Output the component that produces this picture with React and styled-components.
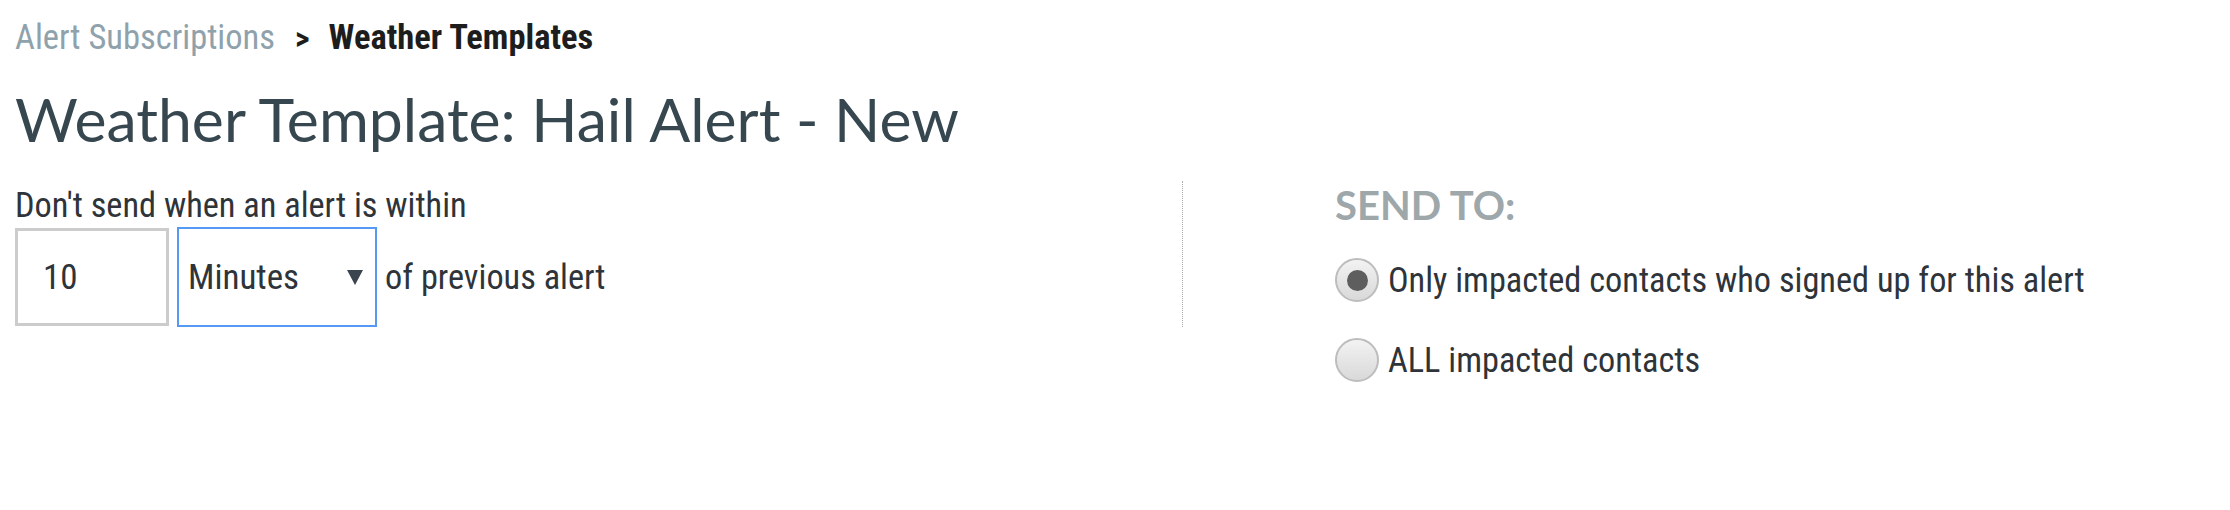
import styled, { createGlobalStyle } from "styled-components";

const GlobalStyle = createGlobalStyle`
  body {
    margin: 0;
    background: #fff;
    font-family: "Roboto Condensed", Roboto, "Liberation Sans", sans-serif;
    font-stretch: condensed;
  }
`;

const Page = styled.div`
  padding: 19px 15px 0 15px;
`;

const Breadcrumb = styled.div`
  display: flex;
  align-items: baseline;
  height: 36px;
  font-size: 34.5px;
  line-height: 36px;
  color: #8fa2ac;
`;

const Crumb = styled.span`
  color: ${(p) => (p.$current ? "#1d1d1d" : "#8fa2ac")};
  font-weight: ${(p) => (p.$current ? 700 : 400)};
`;

const Sep = styled.span`
  color: #1d1d1d;
  font-weight: 700;
  font-size: 32px;
  margin: 0 19px 0 20px;
`;

const Title = styled.h1`
  margin: 28px 0 0 0;
  font-family: Lato, "Liberation Sans", sans-serif;
  font-weight: 400;
  font-stretch: normal;
  font-size: 60.7px;
  line-height: 72px;
  color: #37474f;
`;

const Content = styled.div`
  display: flex;
  margin-top: 26px;
  align-items: flex-start;
`;

const LeftCol = styled.div`
  width: 1167px;
  border-right: 1px dotted #aaaaaa;
  padding-top: 4px;
`;

const Label = styled.div`
  font-size: 34.3px;
  line-height: 41px;
  color: #2e3439;
`;

const InputRow = styled.div`
  display: flex;
  align-items: center;
  gap: 8px;
  margin-top: 1px;
`;

const NumberBox = styled.div`
  box-sizing: border-box;
  width: 154px;
  height: 98px;
  border: 3px solid #cccccc;
  padding-left: 25px;
  display: flex;
  align-items: center;
  font-size: 35px;
  color: #2e3439;
`;

const Select = styled.div`
  box-sizing: border-box;
  width: 200px;
  height: 100px;
  border: 2px solid #5599f5;
  padding: 0 12px 0 9px;
  display: flex;
  align-items: center;
  justify-content: space-between;
  font-size: 35px;
  color: #2e3439;
`;

const Caret = styled.span`
  width: 0;
  height: 0;
  border-left: 8px solid transparent;
  border-right: 8px solid transparent;
  border-top: 15px solid #3a4550;
`;

const Suffix = styled.span`
  font-size: 34.3px;
  color: #2e3439;
`;

const RightCol = styled.div`
  padding-left: 152px;
`;

const SendTo = styled.div`
  font-family: Lato, "Liberation Sans", sans-serif;
  font-stretch: normal;
  font-weight: 700;
  font-size: 40px;
  line-height: 48px;
  color: #9ea7aa;
  margin-bottom: 29px;
`;

const Option = styled.label`
  display: flex;
  align-items: center;
  gap: 9px;
  height: 44px;
  margin-bottom: 36px;
  font-size: 34.3px;
  color: #2e3439;
`;

const Radio = styled.span`
  box-sizing: border-box;
  width: 44px;
  height: 44px;
  border-radius: 50%;
  border: 2px solid #bdbdbd;
  background: linear-gradient(#f2f2f2, #d9d9d9);
  display: flex;
  align-items: center;
  justify-content: center;
  flex-shrink: 0;

  &::after {
    content: "";
    width: 21px;
    height: 21px;
    border-radius: 50%;
    background: ${(p) => (p.$checked ? "#5e5e5e" : "transparent")};
  }
`;

const options = [
  { text: "Only impacted contacts who signed up for this alert", checked: true },
  { text: "ALL impacted contacts", checked: false },
];

export default function App() {
  return (
    <Page>
      <GlobalStyle />
      <Breadcrumb>
        <Crumb>Alert Subscriptions</Crumb>
        <Sep>&gt;</Sep>
        <Crumb $current>Weather Templates</Crumb>
      </Breadcrumb>
      <Title>Weather Template: Hail Alert - New</Title>
      <Content>
        <LeftCol>
          <Label>Don't send when an alert is within</Label>
          <InputRow>
            <NumberBox>10</NumberBox>
            <Select>
              <span>Minutes</span>
              <Caret />
            </Select>
            <Suffix>of previous alert</Suffix>
          </InputRow>
        </LeftCol>
        <RightCol>
          <SendTo>SEND TO:</SendTo>
          {options.map((o) => (
            <Option key={o.text}>
              <Radio $checked={o.checked} />
              {o.text}
            </Option>
          ))}
        </RightCol>
      </Content>
    </Page>
  );
}
